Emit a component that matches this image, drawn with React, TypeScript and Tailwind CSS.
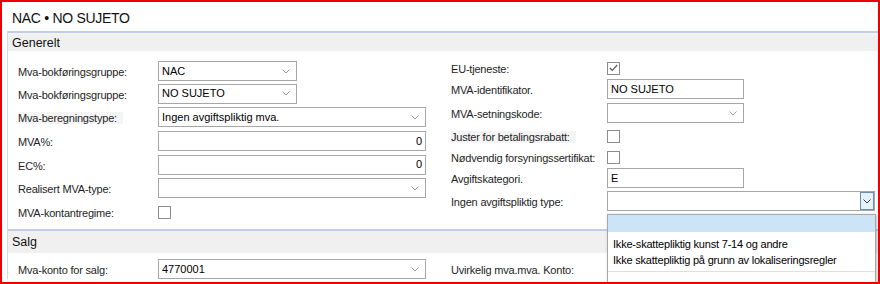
import React from 'react';

const Chevron: React.FC<{ dark?: boolean }> = ({ dark }) => (
  <svg width="8" height="5" viewBox="0 0 8 5" className="shrink-0">
    <polyline points="0.5,0.5 4,4 7.5,0.5" fill="none" stroke={dark ? '#404040' : '#9a9a9a'} strokeWidth="1" />
  </svg>
);

const Select: React.FC<{ value?: string; width: string; open?: boolean }> = ({ value, width, open }) => (
  <div className={`${width} h-[20px] border border-[#a6a6a6] bg-white flex items-center pl-[3px] text-[11px] text-black`}>
    <span className="flex-1 truncate">{value}</span>
    {open ? (
      <div className="w-[14px] h-[18px] border border-[#6d8fb5] bg-[#e5f1fb] flex items-center justify-center">
        <Chevron dark />
      </div>
    ) : (
      <div className="w-[20px] flex items-center justify-center">
        <Chevron />
      </div>
    )}
  </div>
);

const TextBox: React.FC<{ value?: string; width: string; right?: boolean }> = ({ value, width, right }) => (
  <div
    className={`${width} h-[20px] border border-[#a6a6a6] bg-white flex items-center px-[3px] text-[11px] text-black ${
      right ? 'justify-end' : ''
    }`}
  >
    {value}
  </div>
);

const Check: React.FC<{ checked?: boolean }> = ({ checked }) => (
  <div className="w-[13px] h-[13px] border border-[#8c8c8c] bg-white flex items-center justify-center">
    {checked && (
      <svg width="9" height="8" viewBox="0 0 9 8">
        <polyline points="0.8,4 3.3,6.5 8.2,1" fill="none" stroke="#5a5a5a" strokeWidth="1.2" />
      </svg>
    )}
  </div>
);

const Row: React.FC<{ label: string; labelW: string; h: string; shade?: boolean; children: React.ReactNode }> = ({
  label,
  labelW,
  h,
  shade,
  children,
}) => (
  <div className={`flex items-center ${h}`}>
    <div className={`${labelW} shrink-0`}>
      <span className={`text-[11px] tracking-[-0.2px] text-[#1e1e1e] ${shade ? 'bg-[#f4f4f4] pr-[6px]' : ''}`}>
        {label}
      </span>
    </div>
    {children}
  </div>
);

const SectionHeader: React.FC<{ title: string }> = ({ title }) => (
  <div className="border-t-2 border-[#c2cdea] bg-[#f0f0f0]">
    <div className="h-[2px] bg-[#f3f6ee]" />
    <div className="h-[16px] pl-[4px] flex items-center text-[12.5px] text-[#111]">{title}</div>
  </div>
);

export default function App() {
  return (
    <div
      className="relative w-[880px] h-[284px] overflow-hidden border-2 border-[#ee0000] bg-white"
      style={{ fontFamily: '"Liberation Sans", Arial, sans-serif' }}
    >
      <div className="h-[29px] pl-[10px] pt-[6px] text-[14px] tracking-[-0.3px] text-[#111]">NAC • NO SUJETO</div>

      <div className="ml-[5px] border-l border-[#d3d9e6]">
        <SectionHeader title="Generelt" />
        <div className="h-[180px] flex border-b-2 border-[#c2cdea]">
          {/* venstre kolonne */}
          <div className="w-[443px] pl-[10px] pt-[9px] flex flex-col">
            <Row label="Mva-bokføringsgruppe:" labelW="w-[140px]" h="h-[22px]">
              <Select value="NAC" width="w-[139px]" />
            </Row>
            <Row label="Mva-bokføringsgruppe:" labelW="w-[140px]" h="h-[23px]">
              <Select value="NO SUJETO" width="w-[139px]" />
            </Row>
            <Row label="Mva-beregningstype:" labelW="w-[140px]" h="h-[24px]" shade>
              <Select value="Ingen avgiftspliktig mva." width="w-[268px]" />
            </Row>
            <Row label="MVA%:" labelW="w-[140px]" h="h-[24px]">
              <TextBox value="0" width="w-[268px]" right />
            </Row>
            <Row label="EC%:" labelW="w-[140px]" h="h-[23px]">
              <TextBox value="0" width="w-[268px]" right />
            </Row>
            <Row label="Realisert MVA-type:" labelW="w-[140px]" h="h-[24px]">
              <Select width="w-[268px]" />
            </Row>
            <Row label="MVA-kontantregime:" labelW="w-[140px]" h="h-[24px]">
              <Check />
            </Row>
          </div>
          {/* høyre kolonne */}
          <div className="flex-1 pt-[8px] flex flex-col">
            <Row label="EU-tjeneste:" labelW="w-[156px]" h="h-[18px]">
              <Check checked />
            </Row>
            <Row label="MVA-identifikator." labelW="w-[156px]" h="h-[24px]">
              <TextBox value="NO SUJETO" width="w-[137px]" />
            </Row>
            <Row label="MVA-setningskode:" labelW="w-[156px]" h="h-[24px]">
              <Select width="w-[137px]" />
            </Row>
            <Row label="Juster for betalingsrabatt:" labelW="w-[156px]" h="h-[22px]" shade>
              <Check />
            </Row>
            <Row label="Nødvendig forsyningssertifikat:" labelW="w-[156px]" h="h-[20px]">
              <Check />
            </Row>
            <Row label="Avgiftskategori." labelW="w-[156px]" h="h-[22px]">
              <TextBox value="E" width="w-[137px]" />
            </Row>
            <Row label="Ingen avgiftspliktig type:" labelW="w-[156px]" h="h-[24px]">
              <Select width="w-[268px]" open />
            </Row>
          </div>
        </div>

        <div className="bg-[#f0f0f0] h-[22px] pl-[4px] flex items-center text-[12.5px] text-[#111]">Salg</div>
        <div className="flex pt-[6px]">
          <div className="w-[443px] pl-[10px]">
            <Row label="Mva-konto for salg:" labelW="w-[140px]" h="h-[20px]">
              <Select value="4770001" width="w-[268px]" />
            </Row>
          </div>
          <div className="flex-1">
            <Row label="Uvirkelig mva.mva. Konto:" labelW="w-[156px]" h="h-[20px]">
              <span />
            </Row>
          </div>
        </div>
      </div>

      {/* åpen nedtrekksliste */}
      <div className="absolute left-[605px] top-[212px] w-[269px] h-[72px] bg-white border border-[#a8a8a8] shadow-[1px_1px_3px_rgba(0,0,0,0.25)] text-[11px] tracking-[-0.2px] text-black">
        <div className="h-[17px] bg-[#cce4f7]" />
        <div className="pt-[4px] pl-[5px] leading-[16px]">
          <div>Ikke-skattepliktig kunst 7-14 og andre</div>
          <div>Ikke skattepliktig på grunn av lokaliseringsregler</div>
        </div>
        <div className="mt-[3px] border-t border-[#e0e0e0]" />
      </div>
    </div>
  );
}
